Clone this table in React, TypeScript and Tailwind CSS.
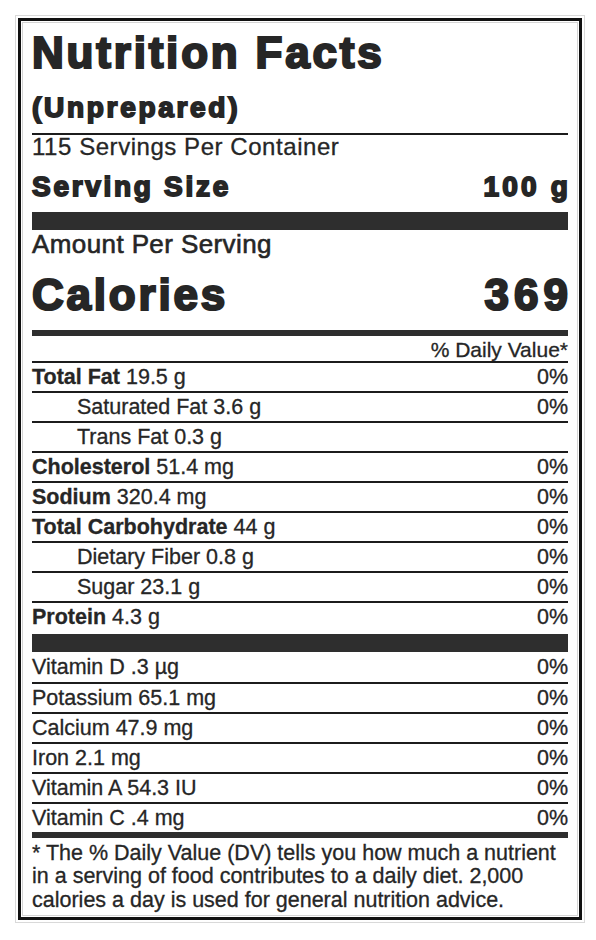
import React from 'react';

interface Nutrient {
  label: string;
  amount: string;
  dv?: string;
  bold?: boolean;
  indent?: boolean;
}

const mainRows: Nutrient[] = [
  { label: 'Total Fat', amount: '19.5 g', dv: '0%', bold: true },
  { label: 'Saturated Fat', amount: '3.6 g', dv: '0%', indent: true },
  { label: 'Trans Fat', amount: '0.3 g', indent: true },
  { label: 'Cholesterol', amount: '51.4 mg', dv: '0%', bold: true },
  { label: 'Sodium', amount: '320.4 mg', dv: '0%', bold: true },
  { label: 'Total Carbohydrate', amount: '44 g', dv: '0%', bold: true },
  { label: 'Dietary Fiber', amount: '0.8 g', dv: '0%', indent: true },
  { label: 'Sugar', amount: '23.1 g', dv: '0%', indent: true },
  { label: 'Protein', amount: '4.3 g', dv: '0%', bold: true },
];

const vitaminRows: Nutrient[] = [
  { label: 'Vitamin D', amount: '.3 µg', dv: '0%' },
  { label: 'Potassium', amount: '65.1 mg', dv: '0%' },
  { label: 'Calcium', amount: '47.9 mg', dv: '0%' },
  { label: 'Iron', amount: '2.1 mg', dv: '0%' },
  { label: 'Vitamin A', amount: '54.3 IU', dv: '0%' },
  { label: 'Vitamin C', amount: '.4 mg', dv: '0%' },
];

function Row({ item, first }: { item: Nutrient; first?: boolean }) {
  return (
    <div
      className={`flex h-[30px] items-center justify-between text-[21.5px] leading-[28px] ${
        first ? '' : 'border-t-2 border-[#1c1c1c]'
      }`}
    >
      <span className={item.indent ? 'pl-[45px]' : ''}>
        <span className={item.bold ? 'font-bold' : ''}>{item.label}</span> {item.amount}
      </span>
      <span>{item.dv ?? ''}</span>
    </div>
  );
}

export default function App() {
  return (
    <div className="min-h-screen bg-white pt-[15px] font-['Liberation_Sans',Arial,sans-serif] text-[#262626] [-webkit-text-stroke:0.3px_#262626]">
      <div className="ml-[15px] w-[570px] border border-[#d9d9d9] p-[2px]">
        <div className="border-[3px] border-[#111] p-[1px]">
          <div className="border border-[#d4d4d4] px-[9px] pt-[6px] pb-[3px]">
            {/* Header */}
            <h1 className="text-[44px] font-bold leading-[48px] tracking-[2.8px] [-webkit-text-stroke:2.2px_#262626]">
              Nutrition Facts
            </h1>
            <div className="mt-[15px] border-b-2 border-[#1c1c1c] pb-[9px] text-[28px] font-bold leading-[32px] tracking-[2.7px] [-webkit-text-stroke:1.8px_#262626]">
              (Unprepared)
            </div>
            <div className="text-[24px] leading-[24px] tracking-[0.55px]">115 Servings Per Container</div>
            <div className="mt-[12px] flex justify-between text-[28px] font-bold leading-[32px] tracking-[2.7px] [-webkit-text-stroke:1.8px_#262626]">
              <span>Serving Size</span>
              <span className="-mr-[3.2px] tracking-[3.2px]">100 g</span>
            </div>
            <div className="mt-[9px] h-[18px] bg-[#2e2e2e]" />

            {/* Calories */}
            <div className="text-[26px] leading-[28px] tracking-[0.4px] [-webkit-text-stroke:0.6px_#262626]">
              Amount Per Serving
            </div>
            <div className="mt-[13px] flex justify-between text-[44px] font-bold leading-[48px] tracking-[2.8px] [-webkit-text-stroke:2.2px_#262626]">
              <span>Calories</span>
              <span className="-mr-[5px] tracking-[5px]">369</span>
            </div>
            <div className="mt-[11px] h-[6px] bg-[#2e2e2e]" />
            <div className="mt-[3px] text-right text-[21px] leading-[22px]">% Daily Value*</div>

            {/* Nutrients */}
            <div>
              {mainRows.map((r) => (
                <Row key={r.label} item={r} />
              ))}
            </div>
            <div className="mt-[3px] h-[18px] bg-[#2e2e2e]" />
            <div>
              {vitaminRows.map((r, i) => (
                <Row key={r.label} item={r} first={i === 0} />
              ))}
            </div>
            <div className="h-[6px] bg-[#2e2e2e]" />

            {/* Footnote */}
            <p className="pt-[4px] text-[21.5px] leading-[23.3px]">
              * The % Daily Value (DV) tells you how much a nutrient
              <br />
              in a serving of food contributes to a daily diet. 2,000
              <br />
              calories a day is used for general nutrition advice.
            </p>
          </div>
        </div>
      </div>
    </div>
  );
}
